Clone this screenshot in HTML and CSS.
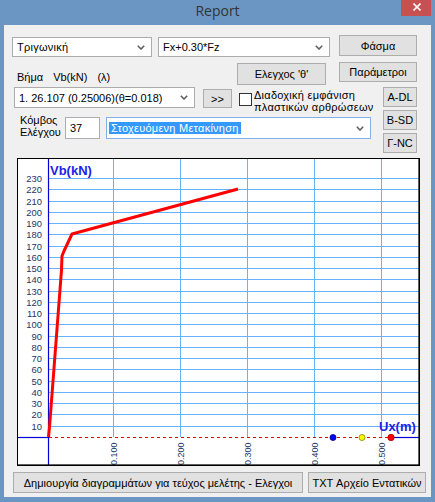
FILE: index.html
```html
<!DOCTYPE html>
<html>
<head>
<meta charset="utf-8">
<title>Report</title>
<link rel="stylesheet" href="styles.css">
</head>
<body>
<div class="window">
  <div class="titlebar">
    <span class="title">Report</span>
    <div class="close">
      <svg class="close-x" width="8" height="8" viewBox="0 0 8 8"><path d="M0.5 0.5 L7.5 7.5 M7.5 0.5 L0.5 7.5" stroke="#fff" stroke-width="1.6"/></svg>
    </div>
  </div>
  <div class="client">
    <div class="row row-a">
      <div class="combo c-type"><span class="val wide">Τριγωνική</span><svg class="chev" width="8" height="5" viewBox="0 0 8 5"><path d="M0.8 0.8 L4 4 L7.2 0.8" fill="none" stroke="#606060" stroke-width="1.6"/></svg></div>
      <div class="combo c-load"><span class="val">Fx+0.30*Fz</span><svg class="chev" width="8" height="5" viewBox="0 0 8 5"><path d="M0.8 0.8 L4 4 L7.2 0.8" fill="none" stroke="#606060" stroke-width="1.6"/></svg></div>
      <div class="btn b-spectrum">Φάσμα</div>
    </div>
    <div class="row row-b">
      <div class="step-label"><span>Βήμα</span><span>Vb(kN)</span><span>(λ)</span></div>
      <div class="btn b-check">Ελεγχος 'θ'</div>
      <div class="btn b-params">Παράμετροι</div>
    </div>
    <div class="row row-c">
      <div class="combo c-step"><span class="val">1. 26.107 (0.25006)(θ=0.018)</span><svg class="chev" width="8" height="5" viewBox="0 0 8 5"><path d="M0.8 0.8 L4 4 L7.2 0.8" fill="none" stroke="#606060" stroke-width="1.6"/></svg></div>
      <div class="btn b-next">&gt;&gt;</div>
      <div class="checkbox"></div>
      <div class="check-label wide">Διαδοχική εμφάνιση<br>πλαστικών αρθρώσεων</div>
      <div class="btn b-small b-adl">A-DL</div>
    </div>
    <div class="row row-d">
      <div class="node-label">Κόμβος<br>Ελέγχου</div>
      <div class="textbox">37</div>
      <div class="combo c-target focused"><span class="val wide"><span class="sel">Στοχευόμενη Μετακίνηση</span></span><svg class="chev" width="8" height="5" viewBox="0 0 8 5"><path d="M0.8 0.8 L4 4 L7.2 0.8" fill="none" stroke="#606060" stroke-width="1.6"/></svg></div>
      <div class="side-buttons">
        <div class="btn b-small">B-SD</div>
        <div class="btn b-small">Γ-NC</div>
      </div>
    </div>
    <div class="chart">
      <svg width="403" height="308" viewBox="17 158 403 308">
        <rect x="17" y="158" width="403" height="308" fill="#fff"/>
        <g stroke="#66b2ff" stroke-width="1">
          <line x1="48" y1="178.5" x2="419" y2="178.5"/>
          <line x1="48" y1="189.5" x2="419" y2="189.5"/>
          <line x1="48" y1="201.5" x2="419" y2="201.5"/>
          <line x1="48" y1="212.5" x2="419" y2="212.5"/>
          <line x1="48" y1="223.5" x2="419" y2="223.5"/>
          <line x1="48" y1="234.5" x2="419" y2="234.5"/>
          <line x1="48" y1="246.5" x2="419" y2="246.5"/>
          <line x1="48" y1="257.5" x2="419" y2="257.5"/>
          <line x1="48" y1="268.5" x2="419" y2="268.5"/>
          <line x1="48" y1="279.5" x2="419" y2="279.5"/>
          <line x1="48" y1="291.5" x2="419" y2="291.5"/>
          <line x1="48" y1="302.5" x2="419" y2="302.5"/>
          <line x1="48" y1="313.5" x2="419" y2="313.5"/>
          <line x1="48" y1="324.5" x2="419" y2="324.5"/>
          <line x1="48" y1="336.5" x2="419" y2="336.5"/>
          <line x1="48" y1="347.5" x2="419" y2="347.5"/>
          <line x1="48" y1="358.5" x2="419" y2="358.5"/>
          <line x1="48" y1="369.5" x2="419" y2="369.5"/>
          <line x1="48" y1="381.5" x2="419" y2="381.5"/>
          <line x1="48" y1="392.5" x2="419" y2="392.5"/>
          <line x1="48" y1="403.5" x2="419" y2="403.5"/>
          <line x1="48" y1="414.5" x2="419" y2="414.5"/>
          <line x1="48" y1="426.5" x2="419" y2="426.5"/>
          <line x1="113.5" y1="159" x2="113.5" y2="437"/>
          <line x1="180.5" y1="159" x2="180.5" y2="437"/>
          <line x1="247.5" y1="159" x2="247.5" y2="437"/>
          <line x1="314.5" y1="159" x2="314.5" y2="437"/>
          <line x1="381.5" y1="159" x2="381.5" y2="437"/>
        </g>
        <g class="ylab" fill="#1c3466" font-size="9.4" text-anchor="end">
          <text x="42" y="181.5">230</text>
          <text x="42" y="192.5">220</text>
          <text x="42" y="204.5">210</text>
          <text x="42" y="215.5">200</text>
          <text x="42" y="226.5">190</text>
          <text x="42" y="237.5">180</text>
          <text x="42" y="249.5">170</text>
          <text x="42" y="260.5">160</text>
          <text x="42" y="271.5">150</text>
          <text x="42" y="282.5">140</text>
          <text x="42" y="294.5">130</text>
          <text x="42" y="305.5">120</text>
          <text x="42" y="316.5">110</text>
          <text x="42" y="327.5">100</text>
          <text x="42" y="339.5">90</text>
          <text x="42" y="350.5">80</text>
          <text x="42" y="361.5">70</text>
          <text x="42" y="372.5">60</text>
          <text x="42" y="384.5">50</text>
          <text x="42" y="395.5">40</text>
          <text x="42" y="406.5">30</text>
          <text x="42" y="417.5">20</text>
          <text x="42" y="429.5">10</text>
        </g>
        <g class="xlab" fill="#1c3466" font-size="9">
          <text transform="translate(117 465) rotate(-90)">0.100</text>
          <text transform="translate(184 465) rotate(-90)">0.200</text>
          <text transform="translate(251 465) rotate(-90)">0.300</text>
          <text transform="translate(318 465) rotate(-90)">0.400</text>
          <text transform="translate(385 465) rotate(-90)">0.500</text>
        </g>
        <line x1="48.5" y1="158" x2="48.5" y2="466" stroke="#0000d8" stroke-width="1.2"/>
        <line x1="17" y1="437.5" x2="48" y2="437.5" stroke="#0000d8" stroke-width="1.2"/>
        <line x1="391" y1="437.5" x2="420" y2="437.5" stroke="#0000d8" stroke-width="1.2"/>
        <line x1="49" y1="437.5" x2="391" y2="437.5" stroke="#e00000" stroke-width="1" stroke-dasharray="3 3"/>
        <polyline points="48.5,437 49.5,427 61.5,270 62,256 64,251 72,234 238,189" fill="none" stroke="#ff0000" stroke-width="3" stroke-linejoin="round"/>
        <circle cx="333" cy="437.5" r="3" fill="#0000ff" stroke="#000080" stroke-width="0.8"/>
        <circle cx="362" cy="437.5" r="3" fill="#ffff00" stroke="#808000" stroke-width="0.8"/>
        <circle cx="391" cy="437.5" r="3.2" fill="#ff0000" stroke="#b00000" stroke-width="0.8"/>
        <text class="axis-title" x="50" y="175" fill="#2222e6" font-size="13" font-weight="bold">Vb(kN)</text>
        <text class="axis-title" x="379" y="431" fill="#2222e6" font-size="13" font-weight="bold">Ux(m)</text>
        <rect x="17.5" y="158.5" width="401.5" height="306.5" fill="none" stroke="#000" stroke-width="1"/>
        <line x1="419.5" y1="158" x2="419.5" y2="466" stroke="#000" stroke-width="1.5"/>
        <line x1="17" y1="465.5" x2="420" y2="465.5" stroke="#000" stroke-width="1.5"/>
      </svg>
    </div>
    <div class="row row-bottom">
      <div class="btn b-report">Δημιουργία διαγραμμάτων για τεύχος μελέτης - Ελεγχοι</div>
      <div class="btn b-txt">TXT Αρχείο Εντατικών</div>
    </div>
  </div>
</div>
</body>
</html>
```

FILE: styles.css
```css
* {
  box-sizing: border-box;
}

html,
body {
  margin: 0;
  padding: 0;
}

body {
  width: 435px;
  height: 502px;
  overflow: hidden;
  background: #6b96c3;
  font-family: "Liberation Sans", Arial, sans-serif;
  font-size: 11px;
  color: #000;
}

.wide {
  letter-spacing: 0.25px;
}

.window {
  width: 435px;
  height: 502px;
  display: flex;
  flex-direction: column;
}

.titlebar {
  height: 25px;
  display: grid;
  grid-template-columns: 1fr auto 1fr;
}

.title {
  grid-column: 2;
  font-family: "Open Sans", "Noto Sans", sans-serif;
  font-size: 14px;
  line-height: 22px;
  color: #333;
}

.close {
  grid-column: 3;
  justify-self: end;
  align-self: start;
  width: 30px;
  height: 16px;
  margin-right: 4px;
  background: #c75050;
  display: flex;
  align-items: center;
  justify-content: center;
}

.close-x {
  display: block;
  margin-left: 2px;
  margin-top: -2px;
}

.client {
  margin: 0 4px;
  height: 472px;
  background: #f0f0f0;
  padding-top: 10px;
  display: flex;
  flex-direction: column;
}

.row {
  display: flex;
  align-items: flex-start;
  padding-right: 14px;
  flex-shrink: 0;
}

.btn {
  background: #e1e1e1;
  border: 1px solid #adadad;
  display: flex;
  align-items: center;
  justify-content: center;
  white-space: nowrap;
  flex-shrink: 0;
}

.combo {
  background: #fff;
  border: 1px solid #acacac;
  display: flex;
  align-items: center;
  padding: 0 6px 0 4px;
  flex-shrink: 0;
}

.combo .val {
  flex: 1;
  white-space: nowrap;
  overflow: hidden;
}

.chev {
  display: block;
  flex-shrink: 0;
}

/* row A */
.row-a {
  height: 22px;
}

.c-type {
  margin-left: 8px;
  margin-top: 2px;
  width: 140px;
  height: 20px;
}

.c-load {
  margin-left: 6px;
  margin-top: 2px;
  width: 172px;
  height: 20px;
}

.b-spectrum {
  margin-left: auto;
  width: 78px;
  height: 21px;
}

/* row B */
.row-b {
  margin-top: 5px;
  height: 24px;
}

.step-label {
  margin-left: 13px;
  margin-top: 9px;
  display: flex;
  gap: 10px;
  line-height: 13px;
}

.b-check {
  margin-left: auto;
  margin-top: 1px;
  width: 89px;
  height: 22px;
}

.b-params {
  margin-left: 13px;
  width: 78px;
  height: 20px;
}

/* row C */
.row-c {
  height: 22px;
}

.c-step {
  margin-left: 10px;
  margin-top: 1px;
  width: 181px;
  height: 21px;
}

.b-next {
  margin-left: 8px;
  margin-top: 3px;
  width: 29px;
  height: 19px;
}

.checkbox {
  margin-left: 7px;
  margin-top: 7px;
  width: 13px;
  height: 13px;
  background: #fff;
  border: 1px solid #333;
  flex-shrink: 0;
}

.check-label {
  margin-left: 2px;
  margin-top: 3px;
  line-height: 12px;
  white-space: nowrap;
}

.b-small {
  width: 34px;
  height: 20px;
}

.b-adl {
  margin-left: auto;
  margin-top: 1px;
}

/* row D */
.row-d {
  margin-top: 2px;
  height: 43px;
}

.node-label {
  margin-left: 16px;
  margin-top: 4px;
  width: 45px;
  line-height: 12px;
  flex-shrink: 0;
}

.textbox {
  margin-top: 7px;
  width: 35px;
  height: 22px;
  background: #fff;
  border: 1px solid #abadb3;
  padding-left: 4px;
  display: flex;
  align-items: center;
  flex-shrink: 0;
}

.c-target {
  margin-left: 6px;
  margin-top: 7px;
  width: 265px;
  height: 22px;
  padding-left: 2px;
}

.c-target.focused {
  border-color: #7eb4ea;
}

.sel {
  background: #3399ff;
  color: #fff;
  padding: 2px 2px 2px 2px;
}

.side-buttons {
  margin-left: auto;
  display: flex;
  flex-direction: column;
  gap: 3px;
}

/* chart */
.chart {
  margin-top: 5px;
  margin-left: 13px;
  width: 403px;
  height: 308px;
  flex-shrink: 0;
}

.chart svg {
  display: block;
  font-family: "Liberation Sans", Arial, sans-serif;
}

/* bottom */
.row-bottom {
  margin-top: 6px;
  height: 21px;
}

.b-report {
  margin-left: 9px;
  width: 290px;
  height: 21px;
}

.b-txt {
  margin-left: 5px;
  width: 118px;
  height: 21px;
}
```
